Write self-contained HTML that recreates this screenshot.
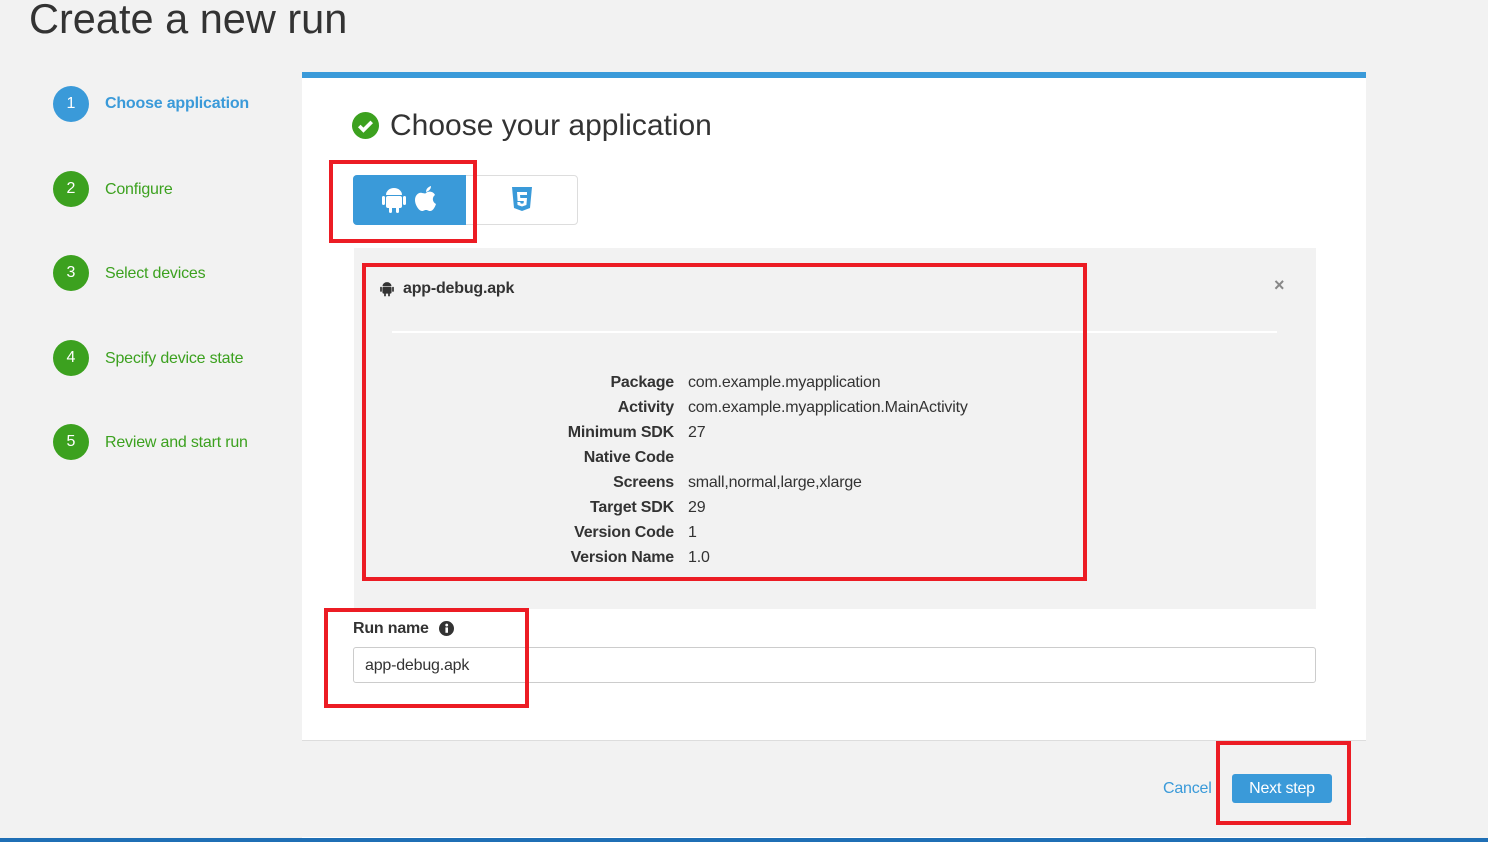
<!DOCTYPE html>
<html><head><meta charset="utf-8"><style>
*{box-sizing:border-box;margin:0;padding:0}
body{width:1488px;height:842px;background:#f2f2f2;font-family:"Liberation Sans",Arial,sans-serif;position:relative;overflow:hidden;color:#333}
.abs{position:absolute}
h1{position:absolute;left:29px;top:-5px;font-size:41.5px;font-weight:normal;color:#333}
.step{position:absolute;left:53px;width:240px;height:36px}
.step .c{position:absolute;left:0;top:0;width:36px;height:36px;border-radius:50%;background:#3ca11f;color:#fff;font-size:16px;text-align:center;line-height:36px}
.step .t{position:absolute;left:52px;top:10px;font-size:16px;color:#3ca11f;letter-spacing:-0.2px}
.panel{left:302px;top:72px;width:1064px;height:766px;background:#fff;border-top:6px solid #3a9ad9}
.foot{left:302px;top:740px;width:1064px;height:97px;background:#f2f2f2;border-top:1px solid #ddd}
.red{position:absolute;border:4px solid #ec1c24}
.lbl{position:absolute;right:814px;font-size:16px;font-weight:bold;color:#333;text-align:right;white-space:nowrap;letter-spacing:-0.2px}
.val{position:absolute;left:688px;font-size:16px;color:#333;white-space:nowrap;letter-spacing:-0.2px}
</style></head><body>
<h1>Create a new run</h1>
<div class="step" style="top:86px"><div class="c" style="background:#3a9ad9">1</div><div class="t" style="color:#3a9ad9;font-weight:bold;top:9px">Choose application</div></div>
<div class="step" style="top:171px"><div class="c">2</div><div class="t">Configure</div></div>
<div class="step" style="top:255px"><div class="c">3</div><div class="t">Select devices</div></div>
<div class="step" style="top:340px"><div class="c">4</div><div class="t">Specify device state</div></div>
<div class="step" style="top:424px"><div class="c">5</div><div class="t">Review and start run</div></div>

<div class="abs panel"></div>
<div class="abs foot"></div>
<div class="abs" style="left:0;top:838px;width:1488px;height:4px;background:#1f6fb5"></div>

<svg class="abs" style="left:352px;top:112px" width="27" height="27" viewBox="0 0 26 26"><circle cx="13" cy="13" r="13" fill="#3ca11f"/><path d="M7 13.5l4 4 8-8" stroke="#fff" stroke-width="3.5" fill="none"/></svg>
<div class="abs" style="left:390px;top:109px;font-size:30px;color:#333">Choose your application</div>

<div class="abs" style="left:353px;top:175px;width:225px;height:50px;border:1px solid #ddd;border-radius:4px;background:#fff"></div>
<div class="abs" style="left:353px;top:175px;width:113px;height:50px;background:#3a9ad9;border-radius:4px 0 0 4px"></div>
<svg class="abs" style="left:382px;top:186px" width="24" height="28" viewBox="0 0 24 28"><path d="M4 9a8 7 0 0 1 16 0z" fill="#fff"/><rect x="4" y="10" width="16" height="12" rx="2" fill="#fff"/><rect x="0" y="10" width="3" height="9" rx="1.5" fill="#fff"/><rect x="21" y="10" width="3" height="9" rx="1.5" fill="#fff"/><rect x="7" y="20" width="3" height="7" rx="1.5" fill="#fff"/><rect x="14" y="20" width="3" height="7" rx="1.5" fill="#fff"/></svg>
<svg class="abs" style="left:414px;top:185px" width="24" height="28" viewBox="0 0 24 28"><path d="M12 8c2-2 7-2 9 2-3 2-3 7 1 9-1 3-3 7-6 7-2 0-2-1-4-1s-2 1-4 1c-3 0-7-6-7-11s4-8 7-7c2 0 3 1 4 0z" fill="#fff"/><path d="M12 7c0-3 2-5 5-6 0 3-2 5-5 6z" fill="#fff"/></svg>
<svg class="abs" style="left:511px;top:187px" width="22" height="25" viewBox="0 0 22 25"><path d="M1 0h20l-2 21-8 3-8-3z" fill="#3a9ad9"/><path d="M6 5h10v3H9l.3 3H16l-.6 7-4.4 1.5L6.6 18l-.3-3h3l.1 1.2 1.6.5 1.6-.5.2-2.2H6.6z" fill="#fff"/></svg>

<div class="abs" style="left:354px;top:248px;width:962px;height:361px;background:#f2f2f2"></div>
<svg class="abs" style="left:380px;top:281px" width="14" height="16" viewBox="0 0 24 28"><path d="M4 9a8 7 0 0 1 16 0z" fill="#333"/><rect x="4" y="10" width="16" height="12" rx="2" fill="#333"/><rect x="0" y="10" width="3" height="9" rx="1.5" fill="#333"/><rect x="21" y="10" width="3" height="9" rx="1.5" fill="#333"/><rect x="7" y="20" width="3" height="7" rx="1.5" fill="#333"/><rect x="14" y="20" width="3" height="7" rx="1.5" fill="#333"/></svg>
<div class="abs" style="left:403px;top:280px;font-size:16px;font-weight:bold;letter-spacing:-0.2px">app-debug.apk</div>
<div class="abs" style="left:1274px;top:275px;font-size:18px;color:#888;font-weight:bold">×</div>
<div class="abs" style="left:392px;top:331px;width:885px;height:2px;background:#fff"></div>

<div class="lbl" style="top:374px">Package</div><div class="val" style="top:374px">com.example.myapplication</div>
<div class="lbl" style="top:399px">Activity</div><div class="val" style="top:399px">com.example.myapplication.MainActivity</div>
<div class="lbl" style="top:424px">Minimum SDK</div><div class="val" style="top:424px">27</div>
<div class="lbl" style="top:449px">Native Code</div>
<div class="lbl" style="top:474px">Screens</div><div class="val" style="top:474px">small,normal,large,xlarge</div>
<div class="lbl" style="top:499px">Target SDK</div><div class="val" style="top:499px">29</div>
<div class="lbl" style="top:524px">Version Code</div><div class="val" style="top:524px">1</div>
<div class="lbl" style="top:549px">Version Name</div><div class="val" style="top:549px">1.0</div>

<div class="abs" style="left:353px;top:620px;font-size:16px;font-weight:bold;letter-spacing:-0.2px">Run name</div>
<svg class="abs" style="left:439px;top:621px" width="15" height="15" viewBox="0 0 14 14"><circle cx="7" cy="7" r="7" fill="#333"/><rect x="6" y="6" width="2.4" height="5" fill="#fff"/><circle cx="7.2" cy="3.8" r="1.3" fill="#fff"/></svg>
<div class="abs" style="left:353px;top:647px;width:963px;height:36px;border:1px solid #ccc;border-radius:3px;background:#fff;padding:9px 11px;font-size:16px;letter-spacing:-0.2px">app-debug.apk</div>

<div class="abs" style="left:1163px;top:780px;font-size:16px;color:#3a9ad9;letter-spacing:-0.2px">Cancel</div>
<div class="abs" style="left:1232px;top:774px;width:100px;height:29px;background:#3a9ad9;border-radius:3px;color:#fff;font-size:16px;text-align:center;line-height:30px;letter-spacing:-0.2px">Next step</div>

<div class="red" style="left:329px;top:160px;width:148px;height:83px"></div>
<div class="red" style="left:362px;top:263px;width:725px;height:318px"></div>
<div class="red" style="left:324px;top:608px;width:205px;height:100px"></div>
<div class="red" style="left:1216px;top:741px;width:135px;height:84px"></div>
</body></html>
